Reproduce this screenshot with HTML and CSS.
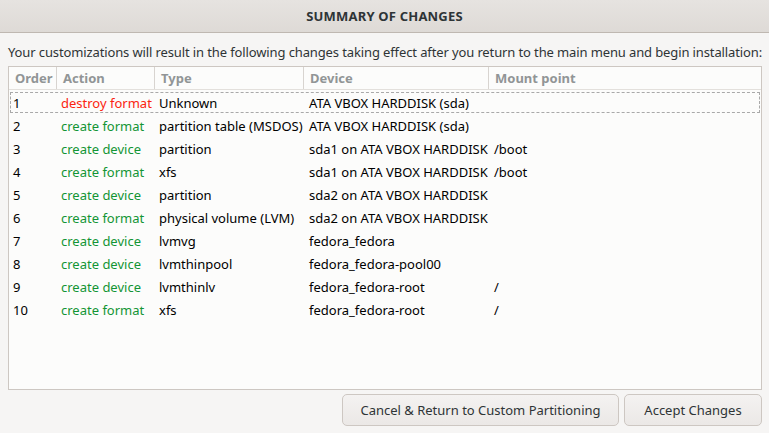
FILE: index.html
```html
<!DOCTYPE html>
<html>
<head>
<meta charset="utf-8">
<link rel="stylesheet" href="styles.css">
</head>
<body>
<div class="dialog">
  <header class="titlebar">SUMMARY OF CHANGES</header>
  <main class="content">
    <p class="intro">Your customizations will result in the following changes taking effect after you return to the main menu and begin installation:</p>
    <div class="table">
      <div class="row head">
        <div class="c c-order">Order</div>
        <div class="c c-action">Action</div>
        <div class="c c-type">Type</div>
        <div class="c c-device">Device</div>
        <div class="c c-mount">Mount point</div>
      </div>
      <div class="body">
        <div class="row focus">
          <div class="c c-order">1</div>
          <div class="c c-action destroy">destroy format</div>
          <div class="c c-type">Unknown</div>
          <div class="c c-device">ATA VBOX HARDDISK (sda)</div>
          <div class="c c-mount"></div>
        </div>
        <div class="row">
          <div class="c c-order">2</div>
          <div class="c c-action create">create format</div>
          <div class="c c-type">partition table (MSDOS)</div>
          <div class="c c-device">ATA VBOX HARDDISK (sda)</div>
          <div class="c c-mount"></div>
        </div>
        <div class="row">
          <div class="c c-order">3</div>
          <div class="c c-action create">create device</div>
          <div class="c c-type">partition</div>
          <div class="c c-device">sda1 on ATA VBOX HARDDISK</div>
          <div class="c c-mount">/boot</div>
        </div>
        <div class="row">
          <div class="c c-order">4</div>
          <div class="c c-action create">create format</div>
          <div class="c c-type">xfs</div>
          <div class="c c-device">sda1 on ATA VBOX HARDDISK</div>
          <div class="c c-mount">/boot</div>
        </div>
        <div class="row">
          <div class="c c-order">5</div>
          <div class="c c-action create">create device</div>
          <div class="c c-type">partition</div>
          <div class="c c-device">sda2 on ATA VBOX HARDDISK</div>
          <div class="c c-mount"></div>
        </div>
        <div class="row">
          <div class="c c-order">6</div>
          <div class="c c-action create">create format</div>
          <div class="c c-type">physical volume (LVM)</div>
          <div class="c c-device">sda2 on ATA VBOX HARDDISK</div>
          <div class="c c-mount"></div>
        </div>
        <div class="row">
          <div class="c c-order">7</div>
          <div class="c c-action create">create device</div>
          <div class="c c-type">lvmvg</div>
          <div class="c c-device">fedora_fedora</div>
          <div class="c c-mount"></div>
        </div>
        <div class="row">
          <div class="c c-order">8</div>
          <div class="c c-action create">create device</div>
          <div class="c c-type">lvmthinpool</div>
          <div class="c c-device">fedora_fedora-pool00</div>
          <div class="c c-mount"></div>
        </div>
        <div class="row">
          <div class="c c-order">9</div>
          <div class="c c-action create">create device</div>
          <div class="c c-type">lvmthinlv</div>
          <div class="c c-device">fedora_fedora-root</div>
          <div class="c c-mount">/</div>
        </div>
        <div class="row">
          <div class="c c-order">10</div>
          <div class="c c-action create">create format</div>
          <div class="c c-type">xfs</div>
          <div class="c c-device">fedora_fedora-root</div>
          <div class="c c-mount">/</div>
        </div>
      </div>
    </div>
    <div class="buttons">
      <button class="btn btn-cancel">Cancel &amp; Return to Custom Partitioning</button>
      <button class="btn btn-accept">Accept Changes</button>
    </div>
  </main>
</div>
</body>
</html>
```
FILE: styles.css
```css
html, body {
  margin: 0;
  padding: 0;
}
body {
  width: 769px;
  height: 433px;
  overflow: hidden;
  background: #f6f5f4;
  font-family: "Noto Sans", "DejaVu Sans", sans-serif;
  font-size: 13px;
  color: #2e3436;
}
.dialog {
  display: flex;
  flex-direction: column;
  height: 433px;
}
.titlebar {
  height: 32px;
  border-bottom: 1px solid #bfb8b1;
  background: linear-gradient(#e6e3e0, #dedad6);
  display: flex;
  align-items: center;
  justify-content: center;
  font-weight: bold;
  font-size: 13px;
  color: #2e3436;
  letter-spacing: 0.2px;
}
.content {
  flex: 1;
  display: flex;
  flex-direction: column;
  padding: 10px 7px 0 8px;
}
.intro {
  margin: 0 0 4px 0;
  height: 19px;
  line-height: 19px;
  white-space: nowrap;
  letter-spacing: -0.12px;
}
.table {
  height: 324px;
  border: 1px solid #cdc7c2;
  background: #fcfcfb;
  box-sizing: border-box;
}
.row {
  display: flex;
  height: 23px;
  align-items: center;
  white-space: nowrap;
  color: #000;
}
.row.head {
  height: 23px;
  color: #919596;
  font-weight: bold;
  border-bottom: 1px solid #e3e0dc;
  box-sizing: border-box;
}
.row.head .c {
  border-left: 1px solid #d8d4d0;
  height: 22px;
  line-height: 22px;
  padding-left: 6px;
}
.row.head .c-order {
  border-left: none;
}
.body {
  padding-top: 1px;
}
.row.focus {
  outline: 1px dashed #a9a9a9;
  outline-offset: -2px;
}
.c {
  box-sizing: border-box;
  padding-left: 5px;
}
.c-order { width: 47px; }
.row:not(.head) .c-order { padding-left: 4px; }
.c-action { width: 98px; }
.c-type { width: 149px; }
.c-device { width: 185px; }
.c-mount { flex: 1; }
.row:not(.head) .c-mount { padding-left: 6px; }
.row:not(.head) .c-device { padding-left: 6px; }
.destroy { color: #fb2410; }
.create { color: #139535; }
.buttons {
  display: flex;
  justify-content: flex-end;
  gap: 5px;
  margin-top: 4px;
}
.btn {
  height: 32px;
  border: 1px solid #cdc7c2;
  border-radius: 5px;
  background: linear-gradient(#f4f2f1, #ebe8e6);
  font-family: inherit;
  font-size: 13px;
  color: #2e3436;
  padding: 0;
  white-space: nowrap;
  box-sizing: border-box;
}
.btn-cancel { width: 277px; }
.btn-accept { width: 138px; }
```
